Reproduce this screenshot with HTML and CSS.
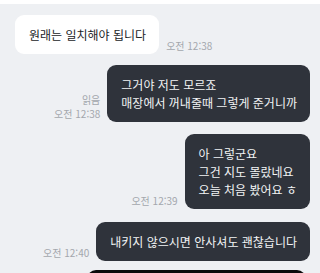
FILE: index.html
```html
<!DOCTYPE html>
<html lang="ko">
<head>
<meta charset="utf-8">
<link rel="stylesheet" href="styles.css">
</head>
<body>
<div class="topbar"></div>
<main class="chat">
  <div class="row in">
    <div class="bubble light">원래는 일치해야 됩니다</div>
    <div class="meta"><span>오전 12:38</span></div>
  </div>
  <div class="row out r2">
    <div class="meta right"><span>읽음</span><span>오전 12:38</span></div>
    <div class="bubble dark">그거야 저도 모르죠<br>매장에서 꺼내줄때 그렇게 준거니까</div>
  </div>
  <div class="row out r3">
    <div class="meta right"><span>오전 12:39</span></div>
    <div class="bubble dark">아 그렇군요<br>그건 지도 몰랐네요<br>오늘 처음 봤어요 ㅎ</div>
  </div>
  <div class="row out r4">
    <div class="meta right"><span>오전 12:40</span></div>
    <div class="bubble dark">내키지 않으시면 안사셔도 괜찮습니다</div>
  </div>
  <div class="row out r5">
    <div class="blackbox"></div>
  </div>
</main>
</body>
</html>
```
FILE: styles.css
```css
* { box-sizing: border-box; }
html, body {
  margin: 0;
  padding: 0;
  width: 320px;
  height: 273px;
  overflow: hidden;
  background: #eef0f3;
  font-family: "Noto Sans CJK KR", "Noto Sans", sans-serif;
}
.topbar {
  height: 4px;
  background: #ffffff;
}
.chat {
  display: flex;
  flex-direction: column;
  padding: 11px 10px 0 15px;
}
.row {
  display: flex;
  align-items: flex-end;
  gap: 7px;
}
.row.out { justify-content: flex-end; }
.r2 { margin-top: 11px; }
.r3 { margin-top: 12px; }
.r4 { margin-top: 13px; }
.r5 { margin-top: 9px; padding-right: 4px; }
.bubble {
  font-size: 12px;
  letter-spacing: 0;
  line-height: 18px;
  padding: 11px 13px 10px 14px;
  border-radius: 9px;
}
.light {
  background: #ffffff;
  color: #222427;
}
.dark {
  background: #2f333b;
  color: #f2f3f5;
}
.meta {
  display: flex;
  flex-direction: column;
  font-size: 10px;
  line-height: 14px;
  color: #a3a7ad;
  padding-bottom: 1px;
  white-space: nowrap;
}
.meta.right { align-items: flex-end; }
.blackbox {
  width: 219px;
  height: 20px;
  background: #0b0b0c;
  border-radius: 9px 9px 0 0;
}
```
